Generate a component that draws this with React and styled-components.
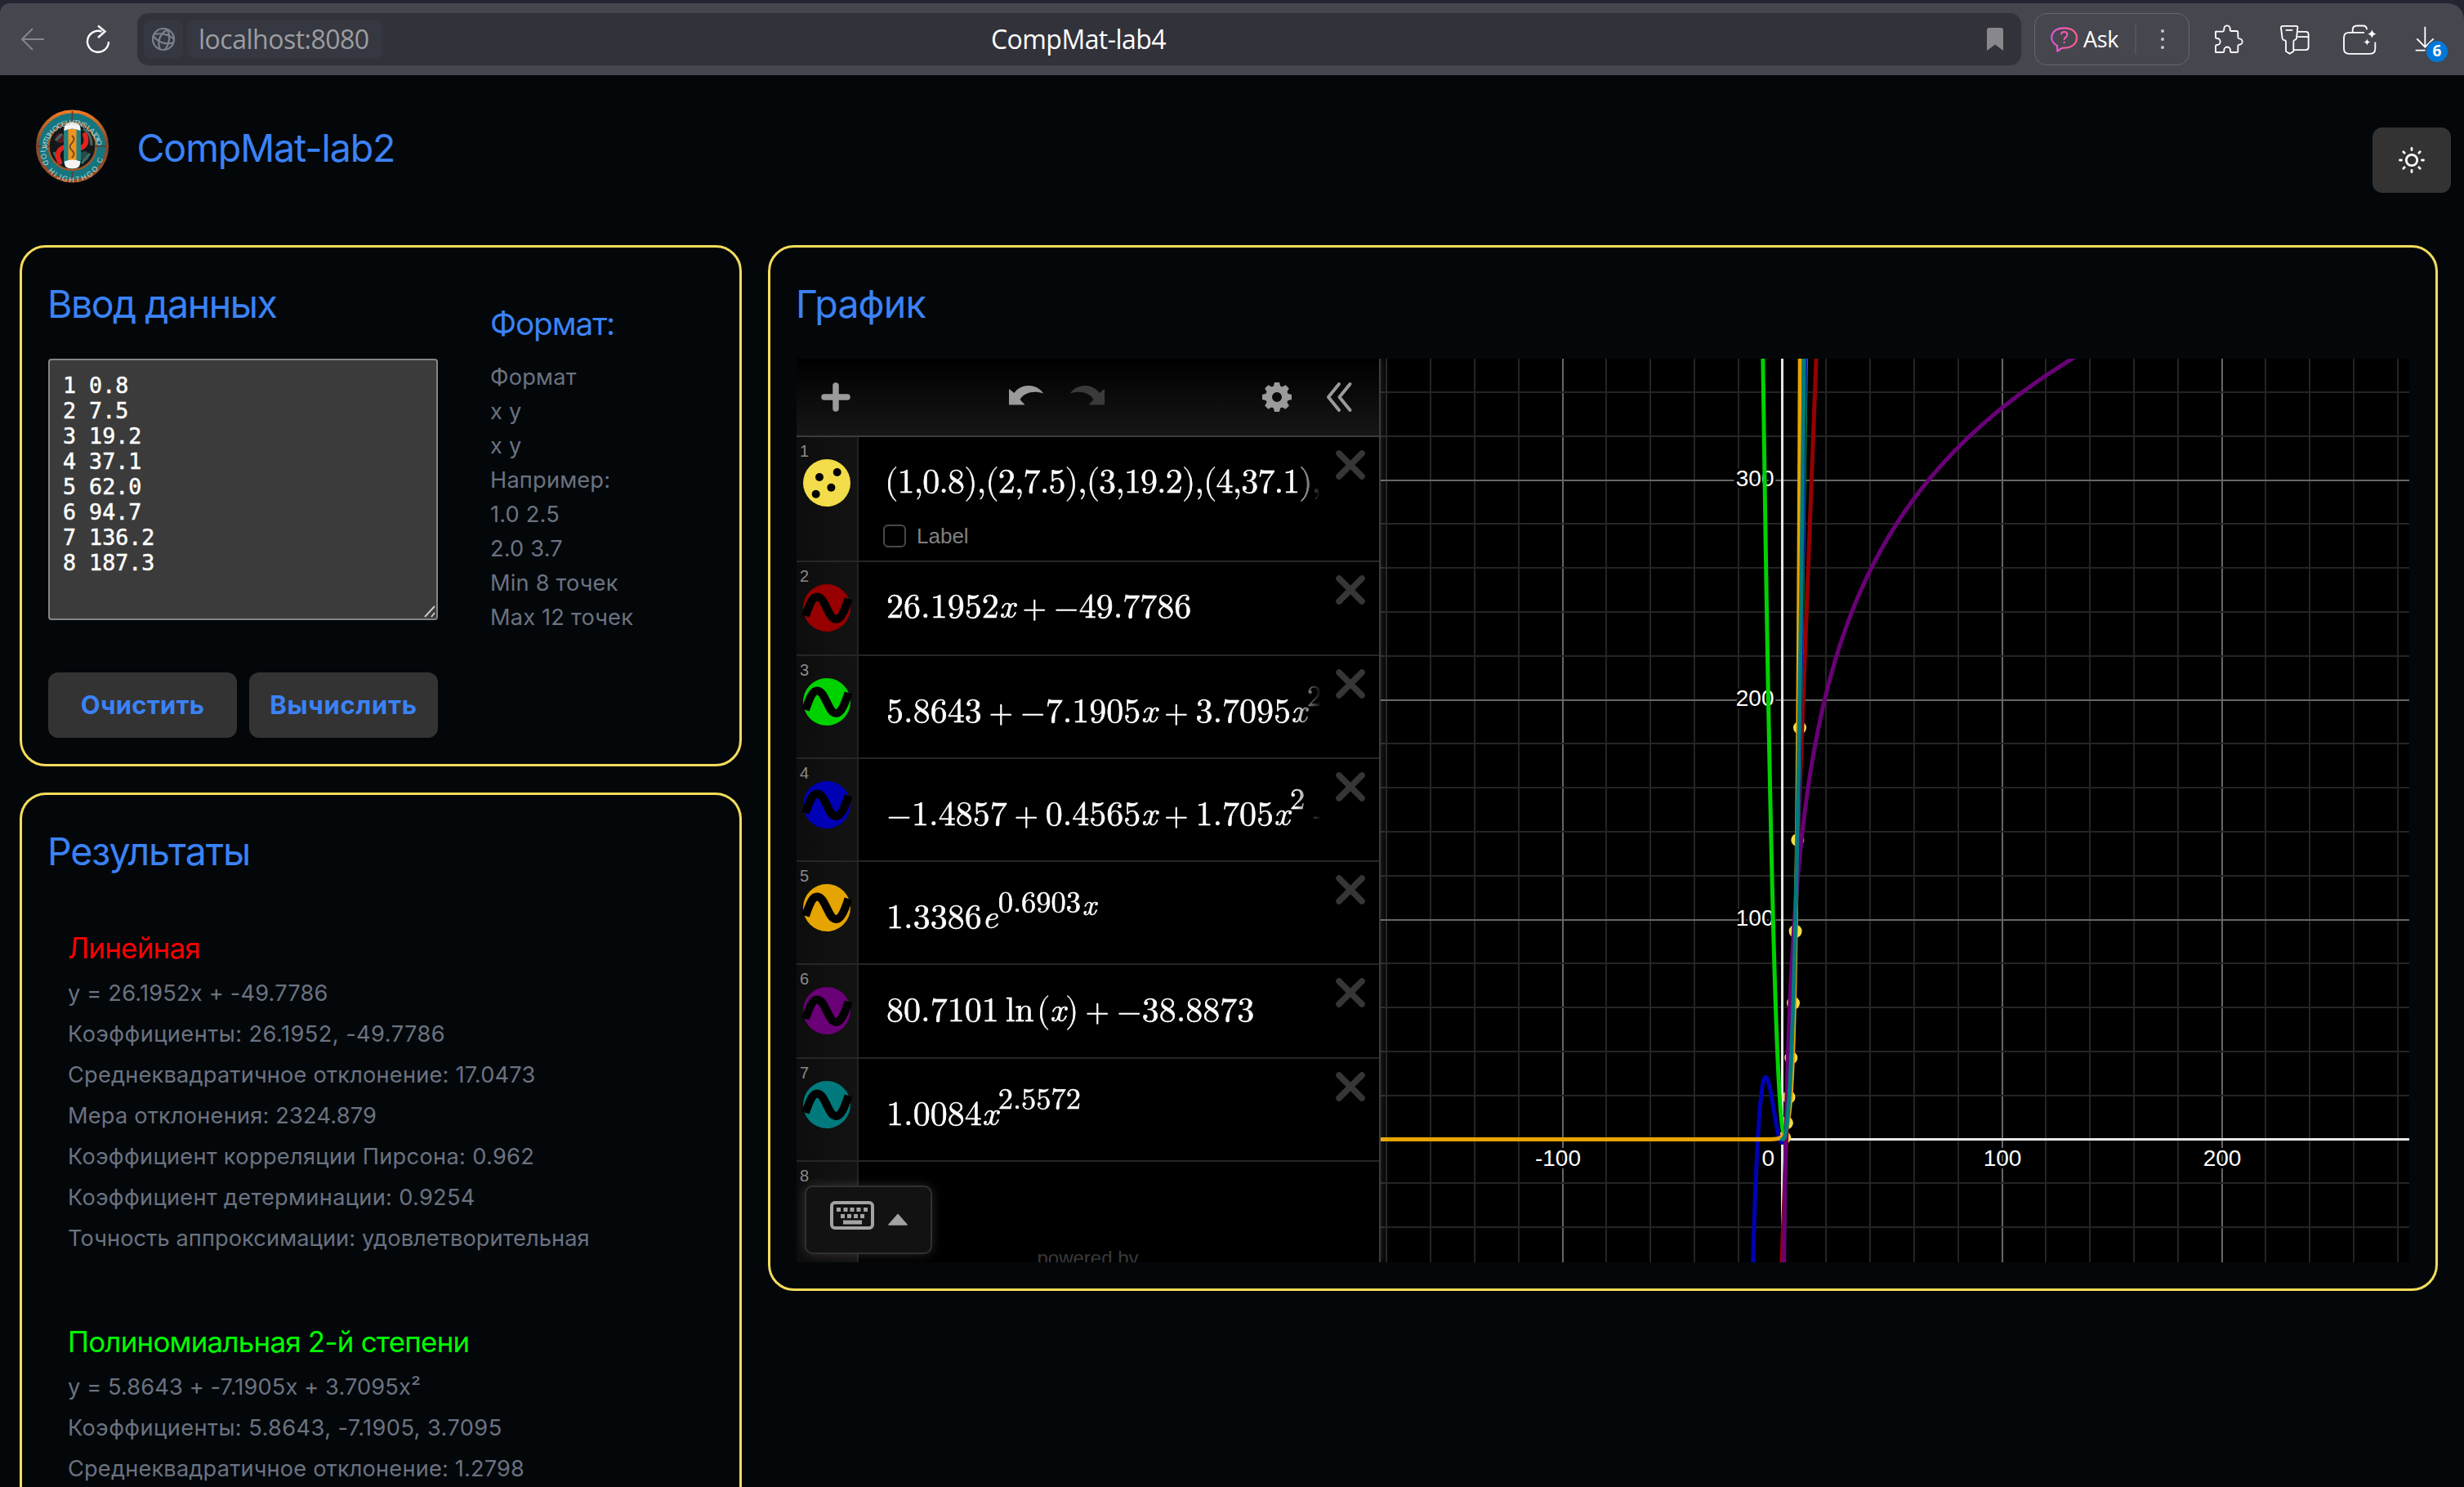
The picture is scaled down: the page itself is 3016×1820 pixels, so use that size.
import React from 'react';
import styled, { createGlobalStyle } from 'styled-components';

const ui = '"Inter", "Liberation Sans", sans-serif';
const chromeFont = '"Open Sans", "Noto Sans", sans-serif';
const arial = '"Liberation Sans", Arial, sans-serif';
const mathFont = '"Latin Modern Math", "Liberation Serif", serif';

const GlobalStyle = createGlobalStyle`
  *, *::before, *::after { box-sizing: border-box; }
  html, body { margin: 0; background: #03070a; overflow: hidden; }
  h1, h2, h3, p { margin: 0; font-weight: 400; }
  button { font: inherit; border: 0; padding: 0; }
  svg { display: block; flex: none; overflow: visible; }
`;

const Page = styled.div`
  width: 3016px;
  height: 1820px;
  overflow: hidden;
  display: flex;
  flex-direction: column;
  background: #03070a;
  font-family: ${ui};
`;

/* ---------- browser bar ---------- */

const BrowserFrame = styled.div`
  flex: none;
  padding-top: 4px;
  background: #232531;
`;

const BrowserBar = styled.div`
  display: flex;
  align-items: center;
  height: 88px;
  padding: 0 20px 0 26px;
  background: #46464f;
  border-radius: 12px 20px 0 0;
  color: #fff;
  font-family: ${chromeFont};
`;

const ReloadSlot = styled.div`
  margin-left: 52px;
`;

const AddressBar = styled.div`
  display: grid;
  grid-template-columns: 1fr auto 1fr;
  align-items: center;
  width: 2306px;
  height: 64px;
  margin-left: 34px;
  padding: 0 22px 0 20px;
  border-radius: 14px;
  background: #32323b;
`;

const UrlGroup = styled.div`
  display: flex;
  align-items: center;
  gap: 5px;
  margin-left: -12px;
`;

const Chip = styled.div`
  display: flex;
  align-items: center;
  height: 48px;
  padding: ${(p) => (p.$icon ? '0 10px' : '0 16px 0 14px')};
  border-radius: 10px;
  background: #353840;
  color: #9d9da2;
  font-size: 32px;
  line-height: 48px;
  letter-spacing: -0.5px;
`;

const TabTitle = styled.div`
  font-size: 32px;
  line-height: 48px;
  letter-spacing: -0.55px;
`;

const BookmarkSlot = styled.div`
  justify-self: end;
`;

const AskPill = styled.div`
  display: flex;
  align-items: center;
  width: 190px;
  height: 64px;
  margin-left: 16px;
  padding-left: 19px;
  border: 1px solid #676770;
  border-radius: 15px;
`;

const AskLabel = styled.span`
  margin-left: 7px;
  width: 53px;
  font-size: 27px;
  font-weight: 500;
  line-height: 40px;
  letter-spacing: -0.3px;
`;

const PillDivider = styled.span`
  width: 2px;
  height: 36px;
  margin: 0 30px 0 10px;
  background: #54545d;
`;

const Dots = styled.span`
  display: flex;
  flex-direction: column;
  gap: 6px;
`;

const Dot = styled.i`
  width: 4px;
  height: 4px;
  border-radius: 50%;
  background: #c6c6ca;
`;

const ToolIcon = styled.div`
  position: relative;
  margin-left: ${(p) => p.$gap}px;
`;

const DownloadBadge = styled.span`
  position: absolute;
  left: 14px;
  top: 18px;
  width: 26px;
  height: 26px;
  border-radius: 50%;
  background: #0078d9;
  font-size: 19px;
  font-weight: 700;
  line-height: 25px;
  text-align: center;
`;

/* ---------- page ---------- */

const Header = styled.header`
  flex: none;
  display: flex;
  justify-content: space-between;
  align-items: flex-start;
  height: 208px;
  padding: 42px 16px 0 44px;
`;

const Brand = styled.div`
  display: flex;
  align-items: flex-start;
  gap: 34.5px;
`;

const BrandName = styled.h1`
  margin-top: 18px;
  color: #3b82f6;
  font-size: 46.5px;
  line-height: 58px;
  letter-spacing: -1.1px;
`;

const ThemeButton = styled.button`
  display: grid;
  place-items: center;
  width: 96px;
  height: 80px;
  margin-top: 22px;
  border-radius: 12px;
  background: #333;
`;

const Main = styled.main`
  flex: 1;
  min-height: 0;
  display: grid;
  grid-template-columns: 884px 2044px;
  column-gap: 32px;
  padding-left: 24px;
`;

const LeftColumn = styled.div`
  display: flex;
  flex-direction: column;
  gap: 32px;
  min-height: 0;
`;

const Card = styled.section`
  padding: 32px;
  border: 3px solid #f5dc5b;
  border-radius: 32px;
`;

const InputCard = styled(Card)`
  display: flex;
  height: 638px;
`;

const ResultsCard = styled(Card)`
  flex: 1;
  min-height: 0;
  border-bottom: 0;
  border-radius: 32px 32px 0 0;
`;

const GraphCard = styled(Card)`
  height: 1280px;
`;

const CardTitle = styled.h2`
  margin: 8px 0 38px -1px;
  color: #3b82f6;
  font-size: 46.5px;
  line-height: 58px;
  letter-spacing: ${(p) => p.$tracking}px;
  white-space: nowrap;
`;

const InputColumn = styled.div`
  width: 477px;
`;

const TextareaWrap = styled.div`
  position: relative;
  height: 320px;
`;

const Textarea = styled.textarea`
  display: block;
  width: 100%;
  height: 100%;
  padding: 15px 16px;
  border: 2px solid #858585;
  border-radius: 4px;
  outline: 0;
  background: #3b3b3b;
  color: #fff;
  font: 26.67px/31px "DejaVu Sans Mono", "Liberation Mono", monospace;
  -webkit-text-stroke: 0.5px #fff;
  resize: none;
  overflow: hidden;
`;

const Grip = styled.svg`
  position: absolute;
  right: 3px;
  bottom: 3px;
`;

const Actions = styled.div`
  display: grid;
  grid-template-columns: 1fr 1fr;
  gap: 15px;
  margin-top: 64px;
`;

const ActionButton = styled.button`
  height: 80px;
  padding-bottom: 2px;
  border-radius: 12px;
  background: #333;
  color: #3b82f6;
  font-family: ${ui};
  font-size: 31px;
  font-weight: 700;
  letter-spacing: ${(p) => p.$tracking}px;
`;

const FormatColumn = styled.div`
  padding: 37px 0 0 64px;
`;

const FormatTitle = styled.h3`
  margin-bottom: 21px;
  color: #3b82f6;
  font-size: 38.75px;
  line-height: 48px;
  letter-spacing: -1.1px;
`;

const FormatLine = styled.p`
  color: #6b7280;
  font-size: 27.2px;
  line-height: 42px;
  letter-spacing: 0.2px;
`;

const ResultsList = styled.div`
  display: flex;
  flex-direction: column;
  gap: 76px;
  margin-top: 64px;
  padding-left: 24px;
`;

const ResultTitle = styled.h3`
  margin-bottom: 6px;
  color: ${(p) => p.$color};
  font-size: 34.9px;
  line-height: 50px;
  letter-spacing: -0.75px;
`;

const ResultLine = styled.p`
  color: #6b7280;
  font-size: 27.2px;
  line-height: 50px;
  letter-spacing: ${(p) => p.$tracking}px;
  white-space: nowrap;
`;

/* ---------- calculator ---------- */

const Calculator = styled.div`
  display: flex;
  width: 1974px;
  height: 1106px;
  overflow: hidden;
  background: #000;
`;

const ExpressionPanel = styled.div`
  position: relative;
  z-index: 1;
  flex: none;
  width: 715px;
  border-right: 2px solid #3c3c3c;
  background: #000;
  box-shadow: 0 0 12px rgba(255, 255, 255, 0.18);
  font-family: ${arial};
`;

const PanelHeader = styled.div`
  display: flex;
  align-items: center;
  height: 96px;
  padding: 0 33px 0 30px;
  border-bottom: 2px solid #3c3c3c;
  background: linear-gradient(#000, #161616);
`;

const HistoryIcons = styled.div`
  display: flex;
  gap: 33px;
  margin: 0 0 5px 194px;
`;

const PanelIcons = styled.div`
  display: flex;
  gap: 42px;
  margin-left: auto;
`;

const Row = styled.div`
  display: flex;
  height: ${(p) => p.$height}px;
  border-bottom: 2px solid #262626;
`;

const RowTab = styled.div`
  flex: none;
  width: 76px;
  padding: 8px 0 0 8px;
  border-right: 2px solid #222;
  background: linear-gradient(90deg, #0d0d0d, #131313);
`;

const RowNumber = styled.div`
  margin-left: -4px;
  color: #8a8a8a;
  font-size: 20px;
  line-height: 19px;
`;

const RowBody = styled.div`
  flex: 1;
  display: flex;
  justify-content: space-between;
  align-items: flex-start;
  padding: 16px 17px 0 34px;
`;

const RowContent = styled.div`
  width: 532px;
  margin-top: -16px;
`;

const Formula = styled.div`
  display: flex;
  align-items: baseline;
  overflow: hidden;
  height: 108px;
  margin-bottom: ${(p) => (p.$dense ? -1 : 0)}px;
  margin-left: ${(p) => (p.$dense ? -2 : 0)}px;
  color: #fff;
  font-family: ${mathFont};
  font-size: 42px;
  line-height: 1;
  white-space: nowrap;
  letter-spacing: ${(p) => (p.$dense ? '-0.92px' : '0')};
  -webkit-text-stroke: 0.5px #fff;
  mask-image: linear-gradient(90deg, #000 calc(100% - 32px), transparent);
`;

const Strut = styled.i`
  width: 0;
  height: ${(p) => p.$height}px;
`;

const Num = styled.span`
  flex: none;
`;

const Variable = styled.span`
  flex: none;
  width: 20px;
  font-family: "Latin Modern Roman", "Liberation Serif", serif;
  font-style: italic;
  text-align: center;
`;

const Binary = styled.span`
  flex: none;
  width: 47px;
  font-size: 38px;
  text-align: center;
`;

const Unary = styled(Binary)`
  width: 31px;
`;

const Func = styled.span`
  flex: none;
  width: 39px;
  margin-left: 8px;
`;

const Paren = styled.span`
  flex: none;
  width: 15px;
  display: flex;
  justify-content: center;
`;

const Sup = styled.span`
  flex: none;
  display: flex;
  font-size: 36.5px;
  transform: translateY(-20px);
`;

const LabelOption = styled.div`
  display: flex;
  align-items: center;
  gap: 13px;
  margin: 0 0 0 -4px;
  color: #808080;
  font-size: 26px;
  line-height: 28px;
`;

const Checkbox = styled.span`
  width: 28px;
  height: 28px;
  border: 2px solid #484848;
  border-radius: 6px;
`;

const KeypadButton = styled.div`
  position: absolute;
  left: 10px;
  bottom: 10px;
  display: flex;
  align-items: flex-start;
  gap: 17px;
  width: 156px;
  height: 84px;
  padding: 17px 0 0 29px;
  border: 2px solid #303030;
  border-radius: 10px;
  background: #121212;
  box-shadow: 0 0 14px rgba(255, 255, 255, 0.14);
`;

const PoweredBy = styled.div`
  position: absolute;
  left: 0;
  right: 0;
  bottom: -9px;
  color: #3a3a3a;
  font-size: 24px;
  line-height: 28px;
  text-align: center;
`;

const Plot = styled.svg`
  width: 1259px;
  height: 1106px;
  overflow: hidden;
`;

/* ---------- drawings ---------- */

const BackIcon = () => (
  <svg width="28" height="26" fill="none" stroke="#85858c" strokeWidth="2">
    <path d="M14 0 1 13l13 13M1 13h27" />
  </svg>
);

const ReloadIcon = () => (
  <svg width="28" height="34" fill="none" stroke="#fff" strokeWidth="2.4">
    <path d="M18.5 7.6A13 13 0 1 0 27 20" />
    <path d="M14 .5l8.500 7-8.500 7.500" />
  </svg>
);

const GlobeIcon = () => (
  <svg width="28" height="28" fill="none" stroke="#7c8089" strokeWidth="2.2">
    <circle cx="14" cy="14" r="13" />
    <path d="M19 2C7 9 7 20 10 26M19 2c4 9 2 18-3 25M1.500 10c7 9 17 11 25 8M3 8c8-2 18 0 24 6" />
  </svg>
);

const BookmarkIcon = () => (
  <svg width="20" height="28" viewBox="0 0 20 28">
    <path d="M3 0h14q3 0 3 3v25L10 20.500 0 28V3Q0 0 3 0Z" fill="#88888c" />
  </svg>
);

const AskIcon = () => (
  <svg width="33" height="32" viewBox="58 68 99 96">
    <defs>
      <linearGradient id="ask" x1="0" x2="1">
        <stop offset="0" stopColor="#e356e0" />
        <stop offset="1" stopColor="#ff5f86" />
      </linearGradient>
    </defs>
    <path
      d="M82 140C46 118 60 75 108 75c30 0 46 16 46 36s-16 37-48 37q-8 0-12 4l-11 8Z"
      fill="none"
      stroke="url(#ask)"
      strokeWidth="6.500"
      strokeLinejoin="round"
    />
    <path d="M97 99q0-10 11-10 11 0 11 10 0 6-6 10-5 3-5 9" fill="none" stroke="#f65ab2" strokeWidth="6" />
    <circle cx="108" cy="128" r="3.500" fill="#f65ab2" />
  </svg>
);

const PuzzleIcon = () => (
  <svg width="36" height="36" viewBox="663 58 108 108" fill="none" stroke="#fff" strokeWidth="5.500">
    <path d="M666 84h26q5-2 5-7v-4a11 11 0 0 1 22 0v4q0 5 5 5h19q5 0 5 5v17q0 5 5 6a11 11 0 0 1 0 22q-5 0-5 5v19q0 4-5 4h-19q-4 0-4-4v-4a11.500 11.500 0 0 0-23 0v4q0 4-5 4h-26v-22q0-5 5-5a12 12 0 0 0 0-24q-5 0-5-5Z" strokeLinejoin="round" />
  </svg>
);

const KeyCardIcon = () => (
  <svg width="36" height="37" viewBox="902 58 108 110" fill="none" stroke="#fff" strokeWidth="5.500" strokeLinejoin="round">
    <path d="M912 63h48q7 0 6 7l-4 38q-1 5-6 6-5 1-5 6v36l-14 9-14-9v-36q-1-6-9-6-3-1-4-6l-5-38q0-7 7-7ZM922 78h26M968 84h28q10 0 10 10v47q0 10-10 10h-43M966 103h40" />
  </svg>
);

const BagIcon = () => (
  <svg width="41" height="37" viewBox="1133 58 123 110" fill="none" stroke="#fff" strokeWidth="5.500">
    <path d="M1211 87h-56q-19 0-19 19v40q0 19 19 19h77q19 0 19-19v-24M1168 86v-8q0-16 16-16h22q14 0 14 14" />
    <path d="M1239 76q3 13 16 16-13 3-16 16-3-13-16-16 13-3 16-16ZM1221 110q2 10 12 12-10 2-12 12-2-10-12-12 10-2 12-12Z" fill="#fff" stroke="none" />
  </svg>
);

const DownloadIcon = () => (
  <svg width="24" height="32" viewBox="1396 70 72 96" fill="none" stroke="#fff" strokeWidth="5.500">
    <path d="M1433 72v76M1403 116l30 31 31-31M1398 159h36" />
    <circle cx="1479" cy="162" r="42" fill="#46464f" stroke="none" />
  </svg>
);

const SunIcon = () => (
  <svg width="32" height="32" viewBox="0 0 32 32" fill="none" stroke="#fff" strokeWidth="2.800" strokeLinecap="round">
    <circle cx="16" cy="16" r="6.700" />
    <path d="M16 1.500v2M16 28.500v2M1.500 16h2M28.500 16h2M5.800 5.800l1.400 1.400M24.800 24.800l1.400 1.400M5.800 26.200l1.400-1.400M24.800 7.200l1.400-1.400" />
  </svg>
);

const LogoIcon = () => (
  <svg width="89" height="90" viewBox="0 0 89 90">
    <defs>
      <linearGradient id="rim" x1="0" x2="0" y1="0" y2="1">
        <stop offset="0" stopColor="#f07a22" />
        <stop offset="0.450" stopColor="#7c4a2e" />
        <stop offset="1" stopColor="#a14e24" />
      </linearGradient>
      <path id="arcTop" d="M13.500 50A31 31 0 1 1 75.500 50" />
      <path id="arcBottom" d="M5.500 50A39 39 0 0 0 83.500 50" />
    </defs>
    <circle cx="44.500" cy="45" r="42.500" fill="#14757f" stroke="url(#rim)" strokeWidth="4" />
    <circle cx="44.500" cy="45" r="29" fill="#15181a" stroke="#9a5a2c" strokeWidth="2.500" />
    <path d="M2 45h84M44.500 2v12M44.500 76v12" stroke="#5b3b28" strokeWidth="1.500" />
    <circle cx="44.500" cy="45" r="27.500" fill="#14181a" />
    <circle cx="30" cy="35" r="6" fill="#5c1d20" />
    <circle cx="59" cy="57" r="6" fill="#28494a" />
    <path d="M22 52q4 10 9 15M58 24q10 5 10 20M24 38l8-8M56 66l10-12" stroke="#3f6a62" strokeWidth="3" fill="none" />
    <path d="M60 31q5 14-8 17M29 64q-7-14 8-19" stroke="#e2231f" strokeWidth="6" fill="none" strokeLinecap="round" />
    <rect x="34" y="22" width="21" height="46" rx="4" fill="#24807f" />
    <rect x="39.500" y="24" width="10" height="42" fill="#f0931e" />
    <path d="M44 32q5 4 0 9t0 9 0 9" stroke="#6a4a1c" strokeWidth="1.800" fill="none" />
    <path d="M34.500 26v-3q0-7 10-7t10 7v3q-10-5-20 0ZM35 63.500q10-4 19 0v2q0 7-9.500 7T35 65.500Z" fill="#f4f4f2" />
    <g fill="#bcd6d5" fontFamily='"Liberation Sans", sans-serif' fontSize="9" fontWeight="400">
      <text textLength="92"><textPath href="#arcTop">JИTIJH OCELHTNS LAJDIO</textPath></text>
      <text textLength="112"><textPath href="#arcBottom">IOD HIJGHTHGO C</textPath></text>
    </g>
  </svg>
);

const PlusIcon = () => (
  <svg width="36" height="36" stroke="#9b9b9b" strokeWidth="7.500" strokeLinecap="round">
    <path d="M18 4v28M4 18h28" />
  </svg>
);

const UndoIcon = ({ flip, color }) => (
  <svg width="42" height="24" viewBox="0 0 42 24">
    <path
      d="M0 4v19.500h19.500L13.500 17C19 8 31 6 42 9.500 35-2 15-4 6.500 9Z"
      fill={color}
      transform={flip ? 'translate(42 0) scale(-1 1)' : undefined}
    />
  </svg>
);

const teeth = Array.from({ length: 8 }, (_, i) => i * 45);

const GearIcon = () => (
  <svg width="36" height="36" viewBox="-18 -18 36 36">
    <circle r="10" fill="none" stroke="#9b9b9b" strokeWidth="8" />
    {teeth.map((a) => (
      <path key={a} d="M-4.500-12-3-18H3l1.500 6Z" fill="#9b9b9b" transform={`rotate(${a})`} />
    ))}
  </svg>
);

const CollapseIcon = () => (
  <svg width="32" height="36" fill="none" stroke="#9b9b9b" strokeWidth="4" strokeLinecap="round" strokeLinejoin="round">
    <path d="M16 2 3 18l13 16M29.500 2l-13 16 13 16" />
  </svg>
);

const CloseIcon = () => (
  <svg width="36" height="36" stroke="#363636" strokeWidth="7.500" strokeLinecap="round">
    <path d="m4 4 28 28M32 4 4 32" />
  </svg>
);

const PointsBadge = () => (
  <svg width="58" height="58">
    <circle cx="29" cy="29" r="29" fill="#f3dc49" />
    <circle cx="20" cy="22" r="5" />
    <circle cx="41.700" cy="16" r="5" />
    <circle cx="34.400" cy="34.700" r="5" />
    <circle cx="15.700" cy="42.700" r="5" />
  </svg>
);

const WaveBadge = ({ color }) => (
  <svg width="58" height="58">
    <circle cx="29" cy="29" r="29" fill={color} />
    <path d="M3 39C9 21 12 15.500 17.500 15.500 27 15.500 31 43 40 43c6.500 0 11-11 15.500-25" fill="none" stroke="#000" strokeWidth="10" />
  </svg>
);

const KeyboardIcon = () => (
  <svg width="54" height="35">
    <rect x="2" y="2" width="50" height="31" rx="4" fill="none" stroke="#a3a3a3" strokeWidth="4" />
    <g fill="#a3a3a3">
      {[8, 16.500, 24.500, 32.500, 41].map((x) => <rect key={x} x={x} y="8" width="5" height="5" />)}
      {[13, 21, 29, 37].map((x) => <rect key={x} x={x} y="16" width="5" height="5" />)}
      <rect x="16" y="23.500" width="23" height="5" />
    </g>
  </svg>
);

const UpIcon = () => (
  <svg width="24" height="35">
    <path d="M12 16.500 23 29H1Z" fill="#a3a3a3" stroke="#a3a3a3" strokeWidth="1.500" strokeLinejoin="round" />
  </svg>
);

/* ---------- data ---------- */

const points = [[1, 0.8], [2, 7.5], [3, 19.2], [4, 37.1], [5, 62], [6, 94.7], [7, 136.2], [8, 187.3]];

const colors = {
  red: '#960000',
  green: '#00d200',
  blue: '#0000b4',
  orange: '#e6a400',
  purple: '#6a0077',
  teal: '#007a7d',
};

const formatLines = ['Формат', 'x y', 'x y', 'Например:', '1.0 2.5', '2.0 3.7', 'Min 8 точек', 'Max 12 точек'];

const results = [
  {
    title: 'Линейная',
    color: '#ff0000',
    lines: [
      ['y = 26.1952x + -49.7786', 0.2],
      ['Коэффициенты: 26.1952, -49.7786', 0.45],
      ['Среднеквадратичное отклонение: 17.0473', 0.2],
      ['Мера отклонения: 2324.879', 0.2],
      ['Коэффициент корреляции Пирсона: 0.962', 0.32],
      ['Коэффициент детерминации: 0.9254', 0.32],
      ['Точность аппроксимации: удовлетворительная', 0.1],
    ],
  },
  {
    title: 'Полиномиальная 2-й степени',
    color: '#00ff00',
    lines: [
      ['y = 5.8643 + -7.1905x + 3.7095x²', 0.13],
      ['Коэффициенты: 5.8643, -7.1905, 3.7095', 0.42],
      ['Среднеквадратичное отклонение: 1.2798', 0.18],
    ],
  },
];

const expressions = [
  {
    color: colors.red, height: 115, base: 68,
    body: <><Num>26.1952</Num><Variable>x</Variable><Binary>+</Binary><Unary>−</Unary><Num>49.7786</Num></>,
  },
  {
    color: colors.green, height: 126, base: 81,
    body: <><Num>5.8643</Num><Binary>+</Binary><Unary>−</Unary><Num>7.1905</Num><Variable>x</Variable><Binary>+</Binary><Num>3.7095</Num><Variable>x</Variable><Sup>2</Sup></>,
  },
  {
    color: colors.blue, height: 126, base: 81,
    body: <><Unary>−</Unary><Num>1.4857</Num><Binary>+</Binary><Num>0.4565</Num><Variable>x</Variable><Binary>+</Binary><Num>1.705</Num><Variable>x</Variable><Sup>2</Sup><Binary>+</Binary></>,
  },
  {
    color: colors.orange, height: 126, base: 81,
    body: <><Num>1.3386</Num><Variable>e</Variable><Sup>0.6903<Variable>x</Variable></Sup></>,
  },
  {
    color: colors.purple, height: 115, base: 69,
    body: <><Num>80.7101</Num><Func>ln</Func><Paren>(</Paren><Variable>x</Variable><Paren>)</Paren><Binary>+</Binary><Unary>−</Unary><Num>38.8873</Num></>,
  },
  {
    color: colors.teal, height: 126, base: 81,
    body: <><Num>1.0084</Num><Variable>x</Variable><Sup>2.5572</Sup></>,
  },
];

/* ---------- graph ---------- */

const W = 1259;
const H = 1106;
const OX = 491.5;
const OY = 955.5;
const S = 2.69;
const px = (x) => OX + x * S;
const py = (y) => OY - y * S;

const curve = (fn, from, to, step = 0.1) => {
  const d = [];
  for (let x = from; x <= to; x += step) {
    const y = Math.max(-1500, Math.min(3000, py(fn(x))));
    d.push(`${d.length ? 'L' : 'M'}${px(x).toFixed(2)} ${y.toFixed(2)}`);
  }
  return d.join('');
};

const curves = [
  [colors.red, curve((x) => 26.1952 * x - 49.7786, -10, 20)],
  [colors.green, curve((x) => 5.8643 - 7.1905 * x + 3.7095 * x * x, -14, 14)],
  [colors.blue, curve((x) => -1.4857 + 0.4565 * x + 1.705 * x * x + 0.1485 * x ** 3, -20, 14)],
  [colors.orange, curve((x) => 1.3386 * Math.exp(0.6903 * x), -190, 10)],
  [colors.purple, curve((x) => 80.7101 * Math.log(x) - 38.8873, 0.05, 200, 0.05)],
  [colors.teal, curve((x) => 1.0084 * x ** 2.5572, 0, 12, 0.05)],
];

const steps = (from, to) => Array.from({ length: to - from + 1 }, (_, i) => from + i).filter(Boolean);
const tone = (k) => (k % 5 === 0 ? '#666' : '#242424');
const byTone = (a, b) => (b % 5 !== 0) - (a % 5 !== 0);

const labels = [
  [481.5, 156, '300', 'end'],
  [481.5, 425, '200', 'end'],
  [481.5, 694, '100', 'end'],
  [482, 987.5, '0', 'end'],
  [217, 987.5, '-100', 'middle'],
  [761, 987.5, '100', 'middle'],
  [1030, 987.5, '200', 'middle'],
];

const GraphPlot = () => (
  <Plot viewBox={`0 0 ${W} ${H}`}>
    <rect width={W} height={H} fill="#000" />
    {steps(-9, 14).sort(byTone).map((k) => (
      <rect key={`v${k}`} x={Math.round(px(k * 20) - 1)} y="0" width="2" height={H} fill={tone(k)} />
    ))}
    {steps(-2, 17).sort(byTone).map((k) => (
      <rect key={`h${k}`} x="0" y={Math.round(py(k * 20) - 1)} width={W} height="2" fill={tone(k)} />
    ))}
    <rect x="490" y="0" width="3" height={H} fill="#e6e6e6" />
    <rect x="0" y="954" width={W} height="3" fill="#e6e6e6" />
    <g fill="#fff" stroke="#000" strokeWidth="6" paintOrder="stroke" fontFamily={arial} fontSize="28">
      {labels.map(([x, y, t, anchor]) => (
        <text key={`${t}${x}`} x={x} y={y} textAnchor={anchor}>{t}</text>
      ))}
    </g>
    {points.map(([x, y]) => <circle key={x} cx={px(x)} cy={py(y)} r="8" fill="#f3dc49" />)}
    {curves.map(([color, d]) => (
      <path key={color} d={d} fill="none" stroke={color} strokeWidth="5" strokeLinejoin="round" strokeLinecap="round" />
    ))}
  </Plot>
);

export default function App() {
  return (
    <Page>
      <GlobalStyle />
      <BrowserFrame>
        <BrowserBar>
          <BackIcon />
          <ReloadSlot><ReloadIcon /></ReloadSlot>
          <AddressBar>
            <UrlGroup>
              <Chip $icon><GlobeIcon /></Chip>
              <Chip>localhost:8080</Chip>
            </UrlGroup>
            <TabTitle>CompMat-lab4</TabTitle>
            <BookmarkSlot><BookmarkIcon /></BookmarkSlot>
          </AddressBar>
          <AskPill>
            <AskIcon />
            <AskLabel>Ask</AskLabel>
            <PillDivider />
            <Dots><Dot /><Dot /><Dot /></Dots>
          </AskPill>
          <ToolIcon $gap={31}><PuzzleIcon /></ToolIcon>
          <ToolIcon $gap={44}><KeyCardIcon /></ToolIcon>
          <ToolIcon $gap={41}><BagIcon /></ToolIcon>
          <ToolIcon $gap={47}>
            <DownloadIcon />
            <DownloadBadge>6</DownloadBadge>
          </ToolIcon>
        </BrowserBar>
      </BrowserFrame>

      <Header>
        <Brand>
          <LogoIcon />
          <BrandName>CompMat-lab2</BrandName>
        </Brand>
        <ThemeButton aria-label="theme"><SunIcon /></ThemeButton>
      </Header>

      <Main>
        <LeftColumn>
          <InputCard>
            <InputColumn>
              <CardTitle $tracking={-1.5}>Ввод данных</CardTitle>
              <TextareaWrap>
                <Textarea readOnly spellCheck={false} value={points.map(([x, y]) => `${x} ${y.toFixed(1)}`).join('\n')} />
                <Grip width="14" height="16" fill="none" stroke="#c8c8c8" strokeWidth="2">
                  <path d="M1 15 13 2M9 15l4-5" />
                </Grip>
              </TextareaWrap>
              <Actions>
                <ActionButton $tracking={0.2}>Очистить</ActionButton>
                <ActionButton $tracking={0.7}>Вычислить</ActionButton>
              </Actions>
            </InputColumn>
            <FormatColumn>
              <FormatTitle>Формат:</FormatTitle>
              {formatLines.map((line, i) => <FormatLine key={i}>{line}</FormatLine>)}
            </FormatColumn>
          </InputCard>

          <ResultsCard>
            <CardTitle $tracking={-1.1}>Результаты</CardTitle>
            <ResultsList>
              {results.map((r) => (
                <div key={r.title}>
                  <ResultTitle $color={r.color}>{r.title}</ResultTitle>
                  {r.lines.map(([text, tracking]) => (
                    <ResultLine key={text} $tracking={tracking}>{text}</ResultLine>
                  ))}
                </div>
              ))}
            </ResultsList>
          </ResultsCard>
        </LeftColumn>

        <GraphCard>
          <CardTitle $tracking={-0.9}>График</CardTitle>
          <Calculator>
            <ExpressionPanel>
              <PanelHeader>
                <PlusIcon />
                <HistoryIcons>
                  <UndoIcon color="#9b9b9b" />
                  <UndoIcon color="#3a3a3a" flip />
                </HistoryIcons>
                <PanelIcons>
                  <GearIcon />
                  <CollapseIcon />
                </PanelIcons>
              </PanelHeader>
              <Row $height={153}>
                <RowTab><RowNumber>1</RowNumber><PointsBadge /></RowTab>
                <RowBody>
                  <RowContent>
                    <Formula $dense>
                      <Strut $height={68} />
                      <Num>{points.slice(0, 4).map(([x, y]) => `(${x},${y}),`).join('')}</Num>
                    </Formula>
                    <LabelOption><Checkbox />Label</LabelOption>
                  </RowContent>
                  <CloseIcon />
                </RowBody>
              </Row>
              {expressions.map((e, i) => (
                <Row key={e.color} $height={e.height}>
                  <RowTab><RowNumber>{i + 2}</RowNumber><WaveBadge color={e.color} /></RowTab>
                  <RowBody>
                    <RowContent>
                      <Formula><Strut $height={e.base} />{e.body}</Formula>
                    </RowContent>
                    <CloseIcon />
                  </RowBody>
                </Row>
              ))}
              <Row $height={126}>
                <RowTab><RowNumber>8</RowNumber></RowTab>
              </Row>
              <KeypadButton><KeyboardIcon /><UpIcon /></KeypadButton>
              <PoweredBy>powered by</PoweredBy>
            </ExpressionPanel>
            <GraphPlot />
          </Calculator>
        </GraphCard>
      </Main>
    </Page>
  );
}
